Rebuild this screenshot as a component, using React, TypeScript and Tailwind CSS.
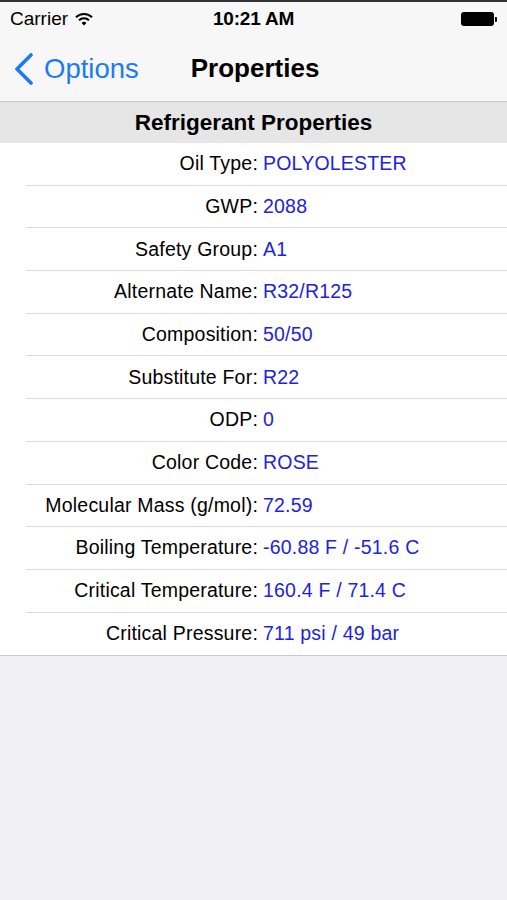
import React from 'react';

const ROWS: [string, string][] = [
    ['Oil Type', 'POLYOLESTER'],
    ['GWP', '2088'],
    ['Safety Group', 'A1'],
    ['Alternate Name', 'R32/R125'],
    ['Composition', '50/50'],
    ['Substitute For', 'R22'],
    ['ODP', '0'],
    ['Color Code', 'ROSE'],
    ['Molecular Mass (g/mol)', '72.59'],
    ['Boiling Temperature', '-60.88 F / -51.6 C'],
    ['Critical Temperature', '160.4 F / 71.4 C'],
    ['Critical Pressure', '711 psi / 49 bar'],
];

const WifiIcon = () => (
    <svg width="18" height="14" viewBox="0 0 18 14" className="ml-[7px]">
        <path d="M1 5.2 A11.5 11.5 0 0 1 17 5.2" stroke="#000" strokeWidth="2" fill="none" />
        <path d="M4 8.2 A7.2 7.2 0 0 1 14 8.2" stroke="#000" strokeWidth="2" fill="none" />
        <path d="M6.6 11 L9 13.6 L11.4 11 A3.4 3.4 0 0 0 6.6 11 Z" fill="#000" />
    </svg>
);

const Battery = () => (
    <div className="flex items-center">
        <div className="w-[33px] h-[14px] rounded-[3px] bg-black" />
        <div className="w-[2px] h-[5px] bg-black rounded-r-[1px] ml-[1px]" />
    </div>
);

export default function App() {
    return (
        <div className="w-[507px] h-[900px] flex flex-col bg-[#efeff4] font-['Liberation_Sans',Arial,sans-serif] text-black overflow-hidden">
            <div className="h-[2px] bg-[#333]" />
            <div className="bg-[#f7f7f7] border-b border-[#c8c8c8]">
                <div className="h-[34px] flex items-center justify-between px-[10px] text-[19px]">
                    <div className="flex items-center w-[120px]">
                        <span>Carrier</span>
                        <WifiIcon />
                    </div>
                    <span className="font-bold tracking-[-0.2px]">10:21 AM</span>
                    <div className="w-[120px] flex justify-end">
                        <Battery />
                    </div>
                </div>
                <div className="h-[65px] flex items-center">
                    <div className="flex items-center pl-[14px] text-[#1a7cf5]">
                        <svg width="20" height="32" viewBox="0 0 20 32">
                            <path d="M17 2 L3 16 L17 30" stroke="#1a7cf5" strokeWidth="3.6" fill="none" strokeLinecap="round" strokeLinejoin="round" />
                        </svg>
                        <span className="ml-[10px] text-[27.5px]">Options</span>
                    </div>
                    <span className="ml-[52px] text-[26px] font-bold">Properties</span>
                </div>
            </div>
            <div className="h-[41px] bg-[#e6e6e6] flex items-center justify-center text-[22.5px] font-bold">
                Refrigerant Properties
            </div>
            <div className="bg-white border-b border-[#c8c8c8]">
                {ROWS.map(([label, value], i) => (
                    <div key={label} className="pl-[26px]">
                        <div className={`h-[42.7px] flex items-center text-[19.5px] tracking-[0.2px] ${i < ROWS.length - 1 ? 'border-b border-[#dcdcdc]' : ''}`}>
                            <span className="w-[232px] text-right whitespace-nowrap">{label}:</span>
                            <span className="ml-[5px] text-[#2222dd] whitespace-nowrap">{value}</span>
                        </div>
                    </div>
                ))}
            </div>
            <div className="flex-1" />
        </div>
    );
}
